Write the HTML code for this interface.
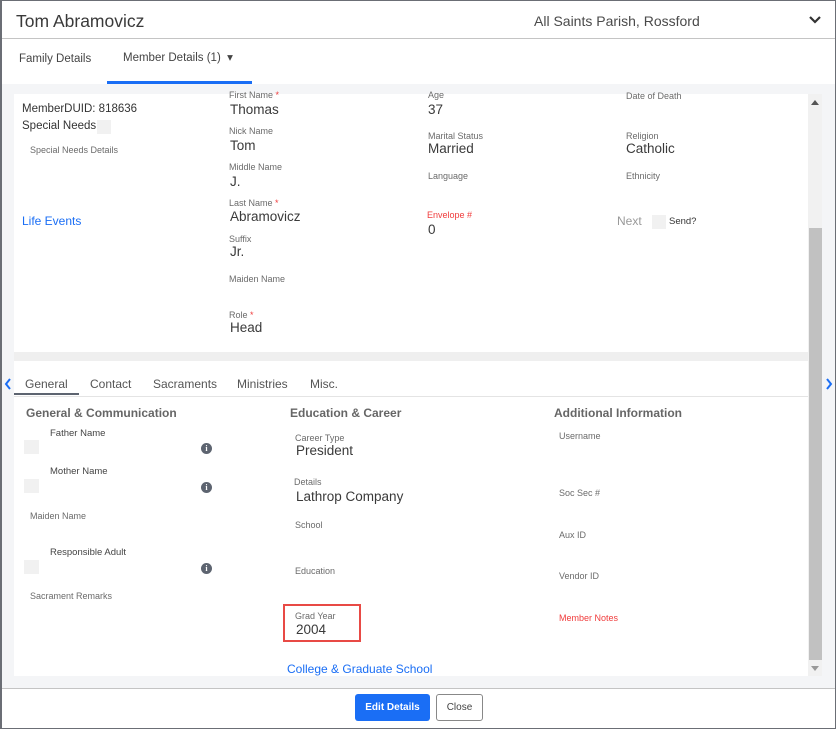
<!DOCTYPE html>
<html><head><meta charset="utf-8"><style>
*{margin:0;padding:0;box-sizing:border-box}
body{width:836px;height:729px;overflow:hidden;background:#fff;font-family:"Liberation Sans",Arial,sans-serif;position:relative;color:#333}
.a{position:absolute;white-space:nowrap}
.l{position:absolute;white-space:nowrap;font-size:9px;line-height:10px;color:#6b6b6b}
.v{position:absolute;white-space:nowrap;font-size:13.5px;line-height:16px;color:#3a3a3a}
.r{color:#f03c3c}
.cb{position:absolute;background:#f1f1f1;width:14px;height:14px}
.info{position:absolute;width:11px;height:11px;border-radius:50%;background:#5d6470;color:#fff;font-size:8px;line-height:11px;text-align:center;font-weight:bold;font-family:"Liberation Serif",serif}
.h{position:absolute;font-size:12px;font-weight:bold;color:#666;line-height:14px}
.t{position:absolute;font-size:12px;color:#555;line-height:14px}
</style></head><body>
<div class="a" style="left:0;top:0;width:836px;height:729px;border:1px solid #6b6e75;border-left:2px solid #6b6e75"></div>
<div class="a" style="left:16px;top:10px;font-size:17.5px;line-height:22px;color:#3a3a3a">Tom Abramovicz</div>
<div class="a" style="left:534px;top:12px;font-size:14px;line-height:18px;color:#4a4a4a">All Saints Parish, Rossford</div>
<svg class="a" style="left:808px;top:15px" width="14" height="10"><path d="M2 2l5 5 5-5" stroke="#333" stroke-width="2.2" fill="none"/></svg>
<div class="a" style="left:2px;top:38px;width:833px;height:1px;background:#c4c4c4"></div>
<div class="a" style="left:19px;top:52px;font-size:11.5px;line-height:14px;color:#444">Family Details</div>
<div class="a" style="left:123px;top:51px;font-size:11.5px;line-height:14px;color:#444">Member Details (1) &nbsp;▾</div>
<div class="a" style="left:107px;top:81px;width:145px;height:3px;background:#1a6ef5"></div>
<div class="a" style="left:2px;top:84px;width:833px;height:604px;background:#f4f5f7"></div>
<div class="a" style="left:14px;top:94px;width:794px;height:582px;background:#fff"></div>
<div class="a" style="left:808px;top:94px;width:14px;height:582px;background:#f1f1f1"></div>
<div class="a" style="left:809px;top:228px;width:13px;height:432px;background:#c1c1c1"></div>
<div class="a" style="left:811px;top:100px;width:0;height:0;border:4px solid transparent;border-bottom:5px solid #555;border-top:0"></div>
<div class="a" style="left:811px;top:666px;width:0;height:0;border:4px solid transparent;border-top:5px solid #999;border-bottom:0"></div>
<div class="a" style="left:14px;top:352px;width:794px;height:9px;background:#efefef"></div>

<div class="a" style="left:22px;top:103px;font-size:11.5px;color:#333">MemberDUID: 818636</div>
<div class="a" style="left:22px;top:120px;font-size:11.5px;color:#333">Special Needs</div>
<div class="cb" style="left:97px;top:120px"></div>
<div class="l" style="left:30px;top:145px">Special Needs Details</div>
<div class="a" style="left:22px;top:214px;font-size:12px;color:#1a6ef5">Life Events</div>

<div class="l" style="left:229px;top:90px">First Name <span class="r">*</span></div>
<div class="v" style="left:230px;top:102px">Thomas</div>
<div class="l" style="left:229px;top:126px">Nick Name</div>
<div class="v" style="left:230px;top:138px">Tom</div>
<div class="l" style="left:229px;top:162px">Middle Name</div>
<div class="v" style="left:230px;top:174px">J.</div>
<div class="l" style="left:229px;top:198px">Last Name <span class="r">*</span></div>
<div class="v" style="left:230px;top:209px">Abramovicz</div>
<div class="l" style="left:229px;top:234px">Suffix</div>
<div class="v" style="left:230px;top:244px">Jr.</div>
<div class="l" style="left:229px;top:274px">Maiden Name</div>
<div class="l" style="left:229px;top:310px">Role <span class="r">*</span></div>
<div class="v" style="left:230px;top:320px">Head</div>

<div class="l" style="left:428px;top:90px">Age</div>
<div class="v" style="left:428px;top:102px">37</div>
<div class="l" style="left:428px;top:131px">Marital Status</div>
<div class="v" style="left:428px;top:141px">Married</div>
<div class="l" style="left:428px;top:171px">Language</div>
<div class="l r" style="left:427px;top:210px">Envelope #</div>
<div class="v" style="left:428px;top:222px">0</div>

<div class="l" style="left:626px;top:91px">Date of Death</div>
<div class="l" style="left:626px;top:131px">Religion</div>
<div class="v" style="left:626px;top:141px">Catholic</div>
<div class="l" style="left:626px;top:171px">Ethnicity</div>
<div class="a" style="left:617px;top:214px;font-size:12px;color:#999">Next</div>
<div class="cb" style="left:652px;top:215px"></div>
<div class="a" style="left:669px;top:216px;font-size:9.5px;color:#333">Send?</div>

<svg class="a" style="left:4px;top:378px" width="8" height="12"><path d="M6 1L2 6l4 5" stroke="#1a6ef5" stroke-width="2" fill="none"/></svg>
<svg class="a" style="left:825px;top:378px" width="8" height="12"><path d="M2 1l4 5-4 5" stroke="#1a6ef5" stroke-width="2" fill="none"/></svg>
<div class="t" style="left:25px;top:377px">General</div>
<div class="t" style="left:90px;top:377px">Contact</div>
<div class="t" style="left:153px;top:377px">Sacraments</div>
<div class="t" style="left:237px;top:377px">Ministries</div>
<div class="t" style="left:310px;top:377px">Misc.</div>
<div class="a" style="left:14px;top:396px;width:794px;height:1px;background:#e4e4e4"></div>
<div class="a" style="left:14px;top:393px;width:65px;height:2px;background:#5d6470"></div>

<div class="h" style="left:26px;top:406px">General &amp; Communication</div>
<div class="h" style="left:290px;top:406px">Education &amp; Career</div>
<div class="h" style="left:554px;top:406px">Additional Information</div>

<div class="l" style="left:50px;top:429px;font-size:9.5px;color:#444">Father Name</div>
<div class="cb" style="left:24px;top:440px;width:15px"></div>
<div class="info" style="left:201px;top:443px">i</div>
<div class="l" style="left:50px;top:467px;font-size:9.5px;color:#444">Mother Name</div>
<div class="cb" style="left:24px;top:479px;width:15px"></div>
<div class="info" style="left:201px;top:482px">i</div>
<div class="l" style="left:30px;top:511px">Maiden Name</div>
<div class="l" style="left:50px;top:548px;font-size:9.5px;color:#444">Responsible Adult</div>
<div class="cb" style="left:24px;top:560px;width:15px"></div>
<div class="info" style="left:201px;top:563px">i</div>
<div class="l" style="left:30px;top:591px">Sacrament Remarks</div>

<div class="l" style="left:295px;top:433px">Career Type</div>
<div class="v" style="left:296px;top:443px">President</div>
<div class="l" style="left:294px;top:477px">Details</div>
<div class="v" style="left:296px;top:489px">Lathrop Company</div>
<div class="l" style="left:295px;top:520px">School</div>
<div class="l" style="left:295px;top:566px">Education</div>
<div class="a" style="left:283px;top:604px;width:78px;height:38px;border:2px solid #e84a45"></div>
<div class="l" style="left:295px;top:611px">Grad Year</div>
<div class="v" style="left:296px;top:622px">2004</div>
<div class="a" style="left:287px;top:662px;font-size:12px;color:#1a6ef5">College &amp; Graduate School</div>

<div class="l" style="left:559px;top:431px">Username</div>
<div class="l" style="left:559px;top:488px">Soc Sec #</div>
<div class="l" style="left:559px;top:530px">Aux ID</div>
<div class="l" style="left:559px;top:571px">Vendor ID</div>
<div class="l r" style="left:559px;top:613px">Member Notes</div>

<div class="a" style="left:2px;top:688px;width:833px;height:1px;background:#c4c4c4"></div>
<div class="a" style="left:355px;top:694px;width:75px;height:27px;background:#1a6ef5;border-radius:3px;color:#fff;font-size:10px;font-weight:bold;line-height:27px;text-align:center">Edit Details</div>
<div class="a" style="left:436px;top:694px;width:47px;height:27px;border:1px solid #888;border-radius:3px;color:#444;font-size:10px;line-height:25px;text-align:center">Close</div>
</body></html>
